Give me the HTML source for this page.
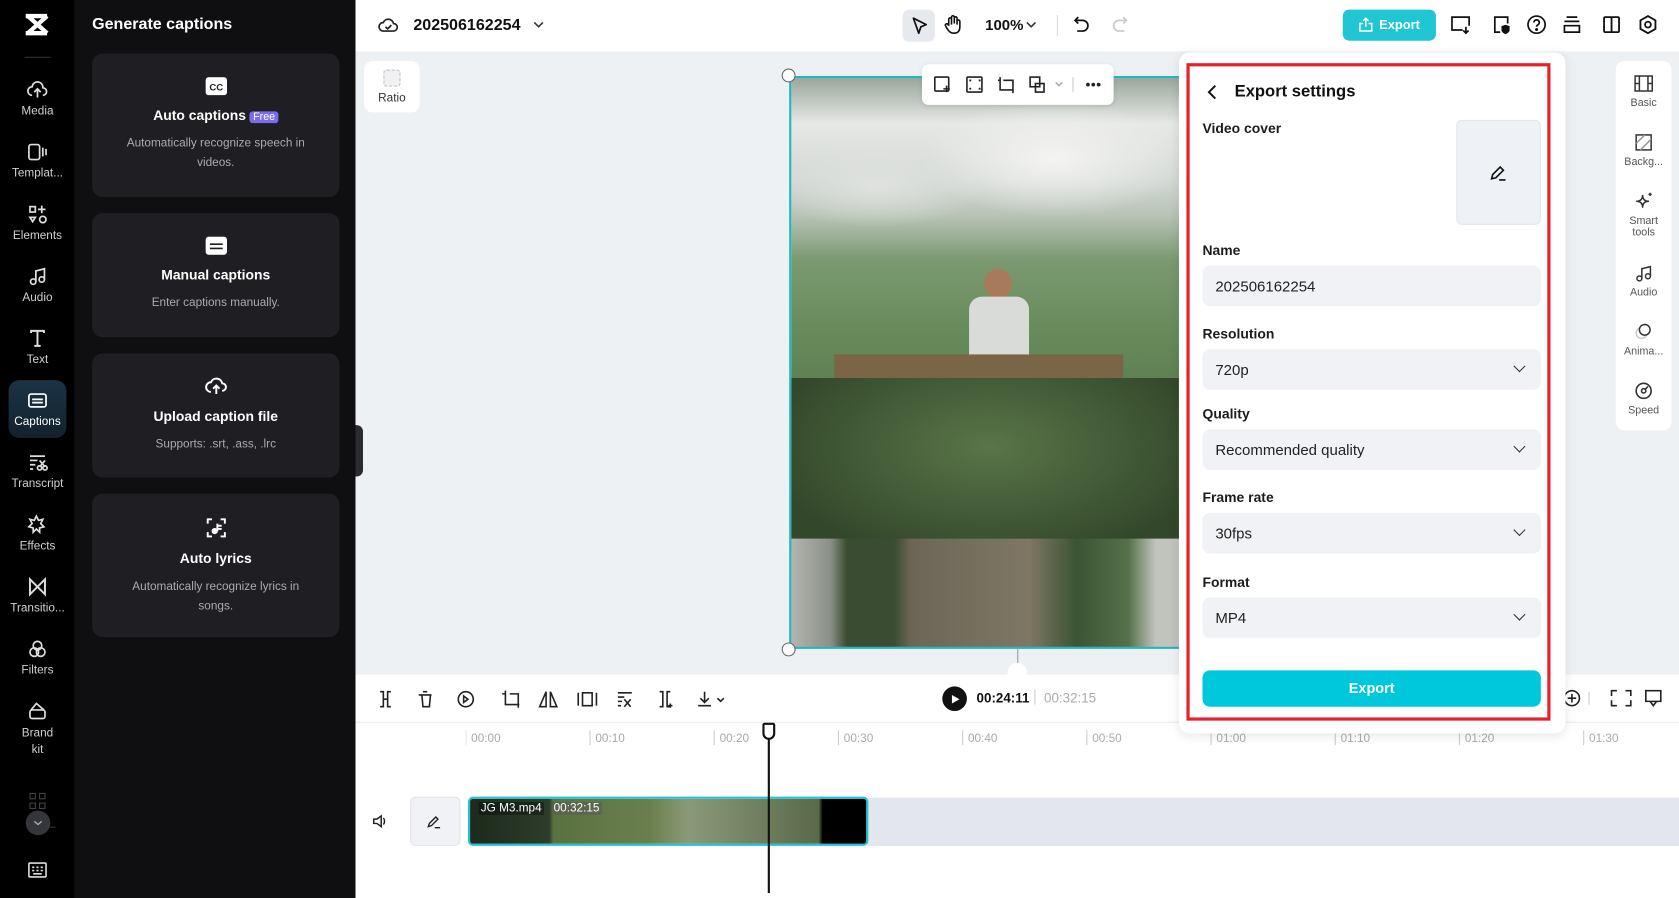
<!DOCTYPE html>
<html><head><meta charset="utf-8"><style>
*{box-sizing:border-box;margin:0;padding:0}
html,body{width:1679px;height:898px;overflow:hidden;background:#fff;font-family:"Liberation Sans",sans-serif}
#w{position:absolute;left:0;top:0;width:1568px;height:839px;transform:scale(1.07079);transform-origin:0 0;background:#eef1f4}
.a{position:absolute}
.nav{left:0;top:0;width:70px;height:839px;background:#000}
.ni{position:absolute;left:0;width:70px;text-align:center;color:#cfd0d4;font-size:11px}
.ni svg{display:block;margin:0 auto 4px}
.panel{left:70px;top:0;width:262px;height:839px;background:#0f0f12}
.card{position:absolute;left:16px;width:231px;background:#1f1f23;border-radius:10px;text-align:center;color:#fff}
.card h4{font-size:13px;font-weight:bold;margin-top:6px}
.card p{font-size:11px;color:#a9abb2;line-height:18px;margin:10px 20px 0}
.top{left:332px;top:0;width:1236px;height:48px;background:#fff}
.lbl{font-size:13px;font-weight:bold;color:#1b1c1f}
.sel{position:absolute;left:1123px;width:316px;height:38px;background:#f0f2f5;border-radius:7px;font-size:14px;color:#222;padding:11px 12px}
.dd:after{content:"";position:absolute;right:16px;top:12px;width:7px;height:7px;border-right:1.5px solid #333;border-bottom:1.5px solid #333;transform:rotate(45deg)}
.rs{position:absolute;left:0;width:52px;text-align:center;font-size:10px;color:#555}
.rs svg{display:block;margin:0 auto 4px}
.tl{font-size:11px;color:#aaa;position:absolute;top:684px}
</style></head><body><div id="w">
<div class="a nav">
 <svg class="a" style="left:22px;top:12px" width="26" height="22" viewBox="0 0 26 22"><path d="M2 3h20M4 3l18 16M22 3L4 19M2 19h20" stroke="#fff" stroke-width="4" fill="none"/></svg>
 <div class="a" style="left:23px;top:53px;width:24px;height:1px;background:#333"></div>
 <div class="ni" style="top:74px"><svg width="20" height="20" viewBox="0 0 20 20" fill="none" stroke="#ddd" stroke-width="1.6"><path d="M5 15a4 4 0 0 1 0-8a5 5 0 0 1 10 1a3.5 3.5 0 0 1 0 7M10 17v-7M7 12l3-3 3 3"/></svg>Media</div>
 <div class="ni" style="top:132px"><svg width="20" height="20" viewBox="0 0 20 20" fill="none" stroke="#ddd" stroke-width="1.6"><rect x="2" y="3" width="10" height="14" rx="2"/><path d="M15 6v8M18 7v6"/></svg>Templat...</div>
 <div class="ni" style="top:190px"><svg width="20" height="20" viewBox="0 0 20 20" fill="none" stroke="#ddd" stroke-width="1.6"><rect x="3" y="3" width="5" height="5"/><path d="M14 2v7M10.5 5.5h7"/><circle cx="15" cy="15" r="3"/><path d="M3 13l2.5 4 2.5-4z"/></svg>Elements</div>
 <div class="ni" style="top:248px"><svg width="20" height="20" viewBox="0 0 20 20" fill="none" stroke="#ddd" stroke-width="1.6"><circle cx="6" cy="15" r="2.5"/><circle cx="14" cy="13" r="2.5"/><path d="M8.5 15V5l8-2v10"/></svg>Audio</div>
 <div class="ni" style="top:306px"><svg width="20" height="20" viewBox="0 0 20 20" fill="none" stroke="#ddd" stroke-width="1.8"><path d="M4 5V3h12v2M10 3v14M7 17h6"/></svg>Text</div>
 <div class="a" style="left:8px;top:355px;width:54px;height:54px;border-radius:10px;background:linear-gradient(#1b3344,#12222d)"></div>
 <div class="ni" style="top:364px;color:#fff"><svg width="20" height="20" viewBox="0 0 20 20" fill="none" stroke="#fff" stroke-width="1.6"><rect x="2" y="4" width="16" height="12" rx="2"/><path d="M5 9h10M5 12h10"/></svg>Captions</div>
 <div class="ni" style="top:422px"><svg width="20" height="20" viewBox="0 0 20 20" fill="none" stroke="#ddd" stroke-width="1.6"><path d="M3 4h14M3 8h7M3 12h5M3 16h3"/><circle cx="12" cy="15" r="2"/><circle cx="17" cy="15" r="2"/><path d="M12 8l5 6M17 8l-5 6"/></svg>Transcript</div>
 <div class="ni" style="top:480px"><svg width="20" height="20" viewBox="0 0 20 20" fill="none" stroke="#ddd" stroke-width="1.6"><path d="M9 2l2 4 4-1-2 4 3 3-4 1v4l-3-3-3 3V13l-4-1 3-3-2-4 4 1z"/></svg>Effects</div>
 <div class="ni" style="top:538px"><svg width="20" height="20" viewBox="0 0 20 20" fill="none" stroke="#ddd" stroke-width="1.8"><path d="M3 3v14l14-14v14z"/></svg>Transitio...</div>
 <div class="ni" style="top:596px"><svg width="20" height="20" viewBox="0 0 20 20" fill="none" stroke="#ddd" stroke-width="1.6"><circle cx="10" cy="7" r="4"/><circle cx="7" cy="13" r="4"/><circle cx="13" cy="13" r="4"/></svg>Filters</div>
 <div class="ni" style="top:654px;line-height:15px"><svg width="20" height="20" viewBox="0 0 20 20" fill="none" stroke="#ddd" stroke-width="1.6"><rect x="3" y="9" width="14" height="8" rx="2"/><path d="M4 9l5-6 7 6"/></svg>Brand<br>kit</div>
 <div class="a" style="left:27px;top:772px;width:25px;height:1px;background:#333"></div>
 <svg class="a" style="left:27px;top:740px" width="16" height="16" viewBox="0 0 16 16" fill="none" stroke="#444"><rect x="1" y="1" width="5" height="5"/><rect x="10" y="1" width="5" height="5"/><rect x="1" y="10" width="5" height="5"/><rect x="10" y="10" width="5" height="5"/></svg>
 <div class="a" style="left:24px;top:757px;width:23px;height:23px;border-radius:50%;background:#34363c"></div>
 <svg class="a" style="left:31px;top:764px" width="9" height="9" viewBox="0 0 9 9"><path d="M1 3l3.5 3L8 3" stroke="#aaa" fill="none" stroke-width="1.3"/></svg>
 <svg class="a" style="left:26px;top:805px" width="18" height="16" viewBox="0 0 18 16" fill="none" stroke="#ddd" stroke-width="1.5"><rect x="1" y="1" width="16" height="13" rx="1"/><path d="M4 5h2M8 5h2M12 5h2M4 8h2M8 8h2M12 8h2M5 11h8"/></svg>
</div>
<div class="a panel">
 <div class="a" style="left:16px;top:14px;color:#fff;font-size:15px;font-weight:bold">Generate captions</div>
 <div class="card" style="top:50px;height:134px"><svg style="margin-top:22px" width="20" height="17" viewBox="0 0 20 17"><rect width="20" height="17" rx="3" fill="#fff"/><text x="10" y="12.5" text-anchor="middle" font-size="9" font-weight="bold" fill="#1f1f23" font-family="Liberation Sans">CC</text></svg><h4>Auto captions <span style="background:#7a6cf0;font-size:10px;padding:0 3px;border-radius:3px;font-weight:normal">Free</span></h4><p>Automatically recognize speech in videos.</p></div>
 <div class="card" style="top:199px;height:116px"><svg style="margin-top:22px" width="20" height="17" viewBox="0 0 20 17"><rect width="20" height="17" rx="3" fill="#fff"/><path d="M4 7h12M4 11h12" stroke="#1f1f23" stroke-width="1.5"/></svg><h4>Manual captions</h4><p>Enter captions manually.</p></div>
 <div class="card" style="top:330px;height:116px"><svg style="margin-top:20px" width="22" height="20" viewBox="0 0 22 20" fill="none" stroke="#fff" stroke-width="1.8"><path d="M6 16a4.5 4.5 0 0 1 0-9a5.5 5.5 0 0 1 10.5 1a3.5 3.5 0 0 1 0 7M11 18v-8M8 13l3-3 3 3"/></svg><h4>Upload caption file</h4><p>Supports: .srt, .ass, .lrc</p></div>
 <div class="card" style="top:461px;height:134px"><svg style="margin-top:22px" width="20" height="20" viewBox="0 0 20 20" fill="none" stroke="#fff" stroke-width="1.8"><path d="M2 6V2h4M14 2h4v4M18 14v4h-4M6 18H2v-4M11 6v7M11 8h4M11 11h4"/><circle cx="8.5" cy="13" r="2" fill="#fff"/></svg><h4>Auto lyrics</h4><p>Automatically recognize lyrics in songs.</p></div>
</div>
<div class="a" style="left:332px;top:397px;width:7px;height:48px;background:#2a2b30;border-radius:0 6px 6px 0"></div>
<div class="a top">
 <svg class="a" style="left:21px;top:14px" width="19" height="18" viewBox="0 0 19 18" fill="none" stroke="#222" stroke-width="1.6"><path d="M5 15a4 4 0 0 1 0-8a5 5 0 0 1 9.5 1a3.5 3.5 0 0 1 0 7z"/><path d="M7 11l2 2 3.5-3.5"/></svg>
 <div class="a" style="left:54px;top:15px;font-size:15px;font-weight:bold;color:#111">202506162254</div>
 <svg class="a" style="left:166px;top:19px" width="10" height="8"><path d="M1 2l4 4 4-4" stroke="#333" fill="none" stroke-width="1.5"/></svg>
 <div class="a" style="left:511px;top:9px;width:30px;height:30px;border-radius:6px;background:#e6e9ee"></div>
 <svg class="a" style="left:518px;top:15px" width="18" height="18" viewBox="0 0 18 18"><path d="M3 2l12 6-5 2-2 6z" fill="none" stroke="#111" stroke-width="1.6" stroke-linejoin="round"/></svg>
 <svg class="a" style="left:549px;top:13px" width="18" height="20" viewBox="0 0 18 20" fill="none" stroke="#111" stroke-width="1.5"><path d="M5 11V5a1.3 1.3 0 0 1 2.6 0v5M7.6 9V3a1.3 1.3 0 0 1 2.6 0v6M10.2 9V4a1.3 1.3 0 0 1 2.6 0v6M12.8 10V7a1.3 1.3 0 0 1 2.6 0v5c0 4-2 6-5.5 6S5 16 3 13l-1-2a1.3 1.3 0 0 1 2.3-1.2L5 11"/></svg>
 <div class="a" style="left:588px;top:15px;font-size:14px;font-weight:bold;color:#111">100%</div>
 <svg class="a" style="left:626px;top:19px" width="10" height="8"><path d="M1 2l4 4 4-4" stroke="#333" fill="none" stroke-width="1.5"/></svg>
 <div class="a" style="left:655px;top:14px;width:1px;height:20px;background:#ddd"></div>
 <svg class="a" style="left:670px;top:14px" width="16" height="18" viewBox="0 0 16 18" fill="none" stroke="#111" stroke-width="1.6"><path d="M5 2L2 5l3 3M2 5h7a5 5 0 0 1 0 10H4"/></svg>
 <svg class="a" style="left:706px;top:14px" width="16" height="18" viewBox="0 0 16 18" fill="none" stroke="#ccc" stroke-width="1.6"><path d="M11 2l3 3-3 3M14 5H7a5 5 0 0 0 0 10h5"/></svg>
 <div class="a" style="left:922px;top:9px;width:87px;height:29px;border-radius:6px;background:#20c6d4;color:#fff;font-size:12px;font-weight:bold;padding:7px 0 0 34px">Export</div>
 <svg class="a" style="left:937px;top:16px" width="13" height="14" viewBox="0 0 13 14" fill="none" stroke="#fff" stroke-width="1.4"><path d="M4 6H1v7h11V6H9M6.5 9V1M4 3.5L6.5 1 9 3.5"/></svg>
 <svg class="a" style="left:1022px;top:14px" width="20" height="18" viewBox="0 0 20 18" fill="none" stroke="#111" stroke-width="1.6"><path d="M12 14H2V2h16v8M15 11v6M12.5 14.5L15 17l2.5-2.5"/></svg>
 <svg class="a" style="left:1061px;top:14px" width="18" height="19" viewBox="0 0 18 19" fill="none" stroke="#111" stroke-width="1.6"><path d="M8 16H3V2h12v6"/><path d="M13 10l3 1v3c0 2-3 3-3 3s-3-1-3-3v-3z" fill="#111"/></svg>
 <svg class="a" style="left:1093px;top:13px" width="20" height="20" viewBox="0 0 20 20" fill="none" stroke="#111" stroke-width="1.6"><circle cx="10" cy="10" r="8"/><path d="M7.5 8a2.5 2.5 0 1 1 3.5 2.3c-.7.4-1 1-1 1.7"/><circle cx="10" cy="14.5" r=".6" fill="#111"/></svg>
 <svg class="a" style="left:1127px;top:14px" width="18" height="18" viewBox="0 0 18 18" fill="none" stroke="#111" stroke-width="1.6"><path d="M4 2h10M2 6h14M2 10h14v6H2z"/></svg>
 <svg class="a" style="left:1164px;top:14px" width="18" height="18" viewBox="0 0 18 18" fill="none" stroke="#111" stroke-width="1.7"><rect x="2" y="2" width="14" height="14" rx="1"/><path d="M9 2v14"/></svg>
 <svg class="a" style="left:1197px;top:13px" width="20" height="20" viewBox="0 0 20 20" fill="none" stroke="#111" stroke-width="1.7"><path d="M10 2l7 4v8l-7 4-7-4V6z"/><circle cx="10" cy="10" r="2.7"/></svg>
</div>
<div class="a" style="left:340px;top:57px;width:52px;height:48px;border-radius:8px;background:#fff;text-align:center;font-size:11px;color:#333;padding-top:8px"><div style="width:16px;height:16px;margin:0 auto 5px;border:1.5px dashed #bbb;border-radius:3px;background:#f1f1f3"></div>Ratio</div>
<!-- video -->
<div class="a" style="left:737px;top:71px;width:370px;height:535px;border:2px solid #1fb7c4;overflow:hidden;background:linear-gradient(#9aa79c 0%,#e6e8e6 8%,#d3d8d4 18%,#b9c4b8 24%,#7b9970 32%,#668b5b 45%,#5d7f52 55%,#3e5a36 62%,#39502f 80%,#5a5d4c 100%)">
 <div class="a" style="left:120px;top:20px;width:250px;height:110px;background:radial-gradient(ellipse,#f4f4f2,rgba(240,240,238,0) 70%)"></div>
 <div class="a" style="left:-20px;top:60px;width:200px;height:80px;background:radial-gradient(ellipse,#dfe2de,rgba(220,224,220,0) 70%)"></div>
 <div class="a" style="left:180px;top:178px;width:26px;height:28px;border-radius:50%;background:#a87a5c"></div>
 <div class="a" style="left:166px;top:204px;width:56px;height:62px;background:#d9dbd8;border-radius:12px 12px 0 0"></div>
 <div class="a" style="left:40px;top:258px;width:270px;height:24px;background:#7a6647"></div>
 <div class="a" style="left:0;top:280px;width:370px;height:160px;background:radial-gradient(ellipse at 50% 40%,#5a7548,#33482b 80%)"></div>
 <div class="a" style="left:0;top:430px;width:370px;height:105px;background:linear-gradient(90deg,#b2b6b0 0,#8a8f86 10%,#3a4c31 14%,#3a4c31 26%,#6b6656 30%,#7e7765 60%,#3b5434 72%,#55704a 85%,#c1c4bc 92%)"></div>
</div>
<div class="a" style="left:730px;top:64px;width:13px;height:13px;border-radius:50%;background:#fff;border:1px solid #666"></div>
<div class="a" style="left:730px;top:600px;width:13px;height:13px;border-radius:50%;background:#fff;border:1px solid #666"></div>
<div class="a" style="left:861px;top:60px;width:179px;height:38px;background:#fff;border-radius:6px;box-shadow:0 1px 4px rgba(0,0,0,.1)"></div>
<svg class="a" style="left:871px;top:70px" width="160" height="18" viewBox="0 0 160 18" fill="none" stroke="#222" stroke-width="1.5"><rect x="2" y="2" width="13" height="13" rx="1"/><path d="M13 10v6M10 13h6"/><rect x="32" y="2" width="14" height="14" rx="1"/><path d="M35 6v-1h1M43 5h1v1M35 12v1h1M44 12v1h-1"/><path d="M63 2v12h12M66 5h9v12M63 5h-2M75 14v2"/><rect x="91" y="2" width="9" height="9"/><rect x="96" y="8" width="8" height="8"/><path d="M115 7l3 3 3-3" stroke="#aaa"/><path d="M131 2v14" stroke="#ddd"/><circle cx="145" cy="9" r="1" fill="#222"/><circle cx="150" cy="9" r="1" fill="#222"/><circle cx="155" cy="9" r="1" fill="#222"/></svg>
<div class="a" style="left:950px;top:606px;width:1px;height:14px;background:#999"></div>
<div class="a" style="left:941px;top:619px;width:18px;height:14px;border-radius:9px 9px 0 0;background:#fff"></div>
<!-- timeline -->
<div class="a" style="left:332px;top:630px;width:1236px;height:209px;background:#fff"></div>
<div class="a" style="left:332px;top:674px;width:1236px;height:1px;background:#e6e8ec"></div>
<svg class="a" style="left:352px;top:643px" width="330" height="20" viewBox="0 0 330 20" fill="none" stroke="#222" stroke-width="1.5"><path d="M3 3h3v14H3M13 3h-3v14h3M6 10h4"/><path d="M39 6h12M42 6l1 11h6l1-11M43 3h4"/><circle cx="83" cy="10" r="7"/><path d="M81 7l4 3-4 3z"/><path d="M120 2v13h13M124 5h8v13M117 5h3"/><path d="M158 17V3l-6 14zM162 17V3l6 14z"/><path d="M188 4v12M205 4v12M192 4h9v12h-9z"/><path d="M225 4h13M225 8h6M225 12h4M225 16h3M231 10l6 7M237 10l-6 7"/><path d="M264 3h3v14h-3M274 3h-3v14h3M274 14v4M272 16h4"/><path d="M306 3v10M302 9l4 4 4-4M300 16h12M318 9l3 3 3-3"/></svg>
<div class="a" style="left:880px;top:641px;width:23px;height:23px;border-radius:50%;background:#111"></div>
<svg class="a" style="left:888px;top:648px" width="9" height="10"><path d="M1 1l7 4-7 4z" fill="#fff"/></svg>
<div class="a" style="left:912px;top:645px;font-size:12.5px;font-weight:bold;color:#111">00:24:11</div>
<div class="a" style="left:966px;top:644px;width:1px;height:14px;background:#ccc"></div>
<div class="a" style="left:975px;top:645px;font-size:12.5px;color:#aaa">00:32:15</div>
<svg class="a" style="left:1458px;top:642px" width="100" height="20" viewBox="0 0 100 20" fill="none" stroke="#222" stroke-width="1.5"><circle cx="10" cy="10" r="7"/><path d="M10 6v8M6 10h8"/><path d="M26 4v12" stroke="#ddd"/><path d="M47 8V3h5M60 3h5v5M65 12v5h-5M52 17h-5v-5"/><path d="M79 3h14v10H79zM83 13l3 4 3-4"/></svg>
<div class="tl" style="left:440px">00:00</div><div class="tl" style="left:556px">00:10</div><div class="tl" style="left:672px">00:20</div><div class="tl" style="left:788px">00:30</div><div class="tl" style="left:904px">00:40</div><div class="tl" style="left:1020px">00:50</div><div class="tl" style="left:1136px">01:00</div><div class="tl" style="left:1252px">01:10</div><div class="tl" style="left:1368px">01:20</div><div class="tl" style="left:1484px">01:30</div>
<svg class="a" style="left:435px;top:680px" width="1130" height="16"><g stroke="#ccc"><path d="M0 2v14M116 2v14M232 2v14M348 2v14M464 2v14M580 2v14M696 2v14M812 2v14M928 2v14M1044 2v14"/></g></svg>
<svg class="a" style="left:347px;top:759px" width="16" height="16" viewBox="0 0 16 16" fill="none" stroke="#222" stroke-width="1.4"><path d="M2 6h3l4-3v10l-4-3H2zM11 5c1.5 1.5 1.5 4.5 0 6"/></svg>
<div class="a" style="left:383px;top:744px;width:47px;height:46px;border-radius:5px;background:#f0f2f5;border:1px solid #e2e4e8"></div>
<svg class="a" style="left:398px;top:760px" width="15" height="15" viewBox="0 0 15 15" fill="none" stroke="#222" stroke-width="1.3"><path d="M2 12l1-3 6-6 2 2-6 6zM8 13h5"/></svg>
<div class="a" style="left:810px;top:745px;width:758px;height:45px;background:#e3e6ec"></div>
<div class="a" style="left:437px;top:744px;width:374px;height:46px;border:2px solid #1fc3d2;border-radius:5px;overflow:hidden;background:linear-gradient(90deg,#1d2a1d 0,#2d3d2a 20%,#5a7240 21%,#6a7f4d 45%,#8a9a78 55%,#5a6a48 88%,#000 89%)">
 <div class="a" style="left:8px;top:3px;font-size:11px;color:#fff;background:rgba(0,0,0,.35);padding:0 2px">JG M3.mp4</div>
 <div class="a" style="left:76px;top:3px;font-size:11px;color:#fff;background:rgba(90,90,90,.6);padding:0 2px">00:32:15</div>
</div>
<div class="a" style="left:717px;top:684px;width:2px;height:150px;background:#111"></div>
<div class="a" style="left:712px;top:675px;width:12px;height:16px;border:2px solid #111;border-radius:2px 2px 6px 6px;background:#fff"></div>
<!-- right sidebar -->
<div class="a" style="left:1509px;top:57px;width:52px;height:345px;background:#fff;border-radius:8px">
 <div class="rs" style="top:12px"><svg width="18" height="18" viewBox="0 0 18 18" fill="none" stroke="#333" stroke-width="1.4"><rect x="1" y="2" width="16" height="14"/><path d="M5 2v14M13 2v14M1 9h4M13 9h4"/></svg>Basic</div>
 <div class="rs" style="top:67px"><svg width="18" height="18" viewBox="0 0 18 18" fill="none" stroke="#333" stroke-width="1.4"><rect x="2" y="2" width="14" height="14"/><path d="M2 10l8-8M6 16l10-10" stroke="#999"/></svg>Backg...</div>
 <div class="rs" style="top:122px;line-height:11px"><svg width="18" height="18" viewBox="0 0 18 18" fill="none" stroke="#333" stroke-width="1.4"><path d="M8 3c0 4 2 6 6 6-4 0-6 2-6 6 0-4-2-6-6-6 4 0 6-2 6-6zM15 1v3M13.5 2.5h3"/></svg>Smart<br>tools</div>
 <div class="rs" style="top:189px"><svg width="18" height="18" viewBox="0 0 18 18" fill="none" stroke="#333" stroke-width="1.4"><circle cx="5" cy="14" r="2.3"/><circle cx="13" cy="12" r="2.3"/><path d="M7.3 14V5l8-2v9"/></svg>Audio</div>
 <div class="rs" style="top:244px"><svg width="18" height="18" viewBox="0 0 18 18" fill="none" stroke-width="1.4"><circle cx="7" cy="10" r="5" stroke="#ccc"/><circle cx="10" cy="7" r="5" stroke="#333" fill="#fff"/></svg>Anima...</div>
 <div class="rs" style="top:299px"><svg width="18" height="18" viewBox="0 0 18 18" fill="none" stroke="#333" stroke-width="1.5"><circle cx="9" cy="9" r="7"/><circle cx="9" cy="9" r="2"/><path d="M10.5 7.5L13 5"/></svg>Speed</div>
</div>
<!-- export panel -->
<div class="a" style="left:1101px;top:49px;width:361px;height:636px;background:#fff;border-radius:10px;box-shadow:0 2px 10px rgba(0,0,0,.1)"></div>
<div class="a" style="left:1108px;top:59px;width:340px;height:614px;border:3.5px solid #e8202b"></div>
<svg class="a" style="left:1126px;top:78px" width="12" height="16" viewBox="0 0 12 16"><path d="M9 2L3 8l6 6" stroke="#111" stroke-width="1.8" fill="none"/></svg>
<div class="a" style="left:1153px;top:77px;font-size:15.5px;font-weight:bold;color:#111">Export settings</div>
<div class="a lbl" style="left:1123px;top:112px">Video cover</div>
<div class="a" style="left:1360px;top:112px;width:79px;height:98px;border-radius:5px;background:#eef1f5;border:1px solid #e3e6ea"></div>
<svg class="a" style="left:1391px;top:153px" width="17" height="17" viewBox="0 0 17 17" fill="none" stroke="#111" stroke-width="1.5"><path d="M2 14l1-4 7-7 3 3-7 7zM9 15h6"/></svg>
<div class="a lbl" style="left:1123px;top:226px">Name</div>
<div class="sel" style="top:248px">202506162254</div>
<div class="a lbl" style="left:1123px;top:304px">Resolution</div>
<div class="sel dd" style="top:326px">720p</div>
<div class="a lbl" style="left:1123px;top:379px">Quality</div>
<div class="sel dd" style="top:401px">Recommended quality</div>
<div class="a lbl" style="left:1123px;top:457px">Frame rate</div>
<div class="sel dd" style="top:479px">30fps</div>
<div class="a lbl" style="left:1123px;top:536px">Format</div>
<div class="sel dd" style="top:558px">MP4</div>
<div class="a" style="left:1123px;top:626px;width:316px;height:34px;border-radius:7px;background:#00c8dc;color:#fff;font-size:13.5px;font-weight:bold;text-align:center;padding-top:9px">Export</div>
</div></body></html>
